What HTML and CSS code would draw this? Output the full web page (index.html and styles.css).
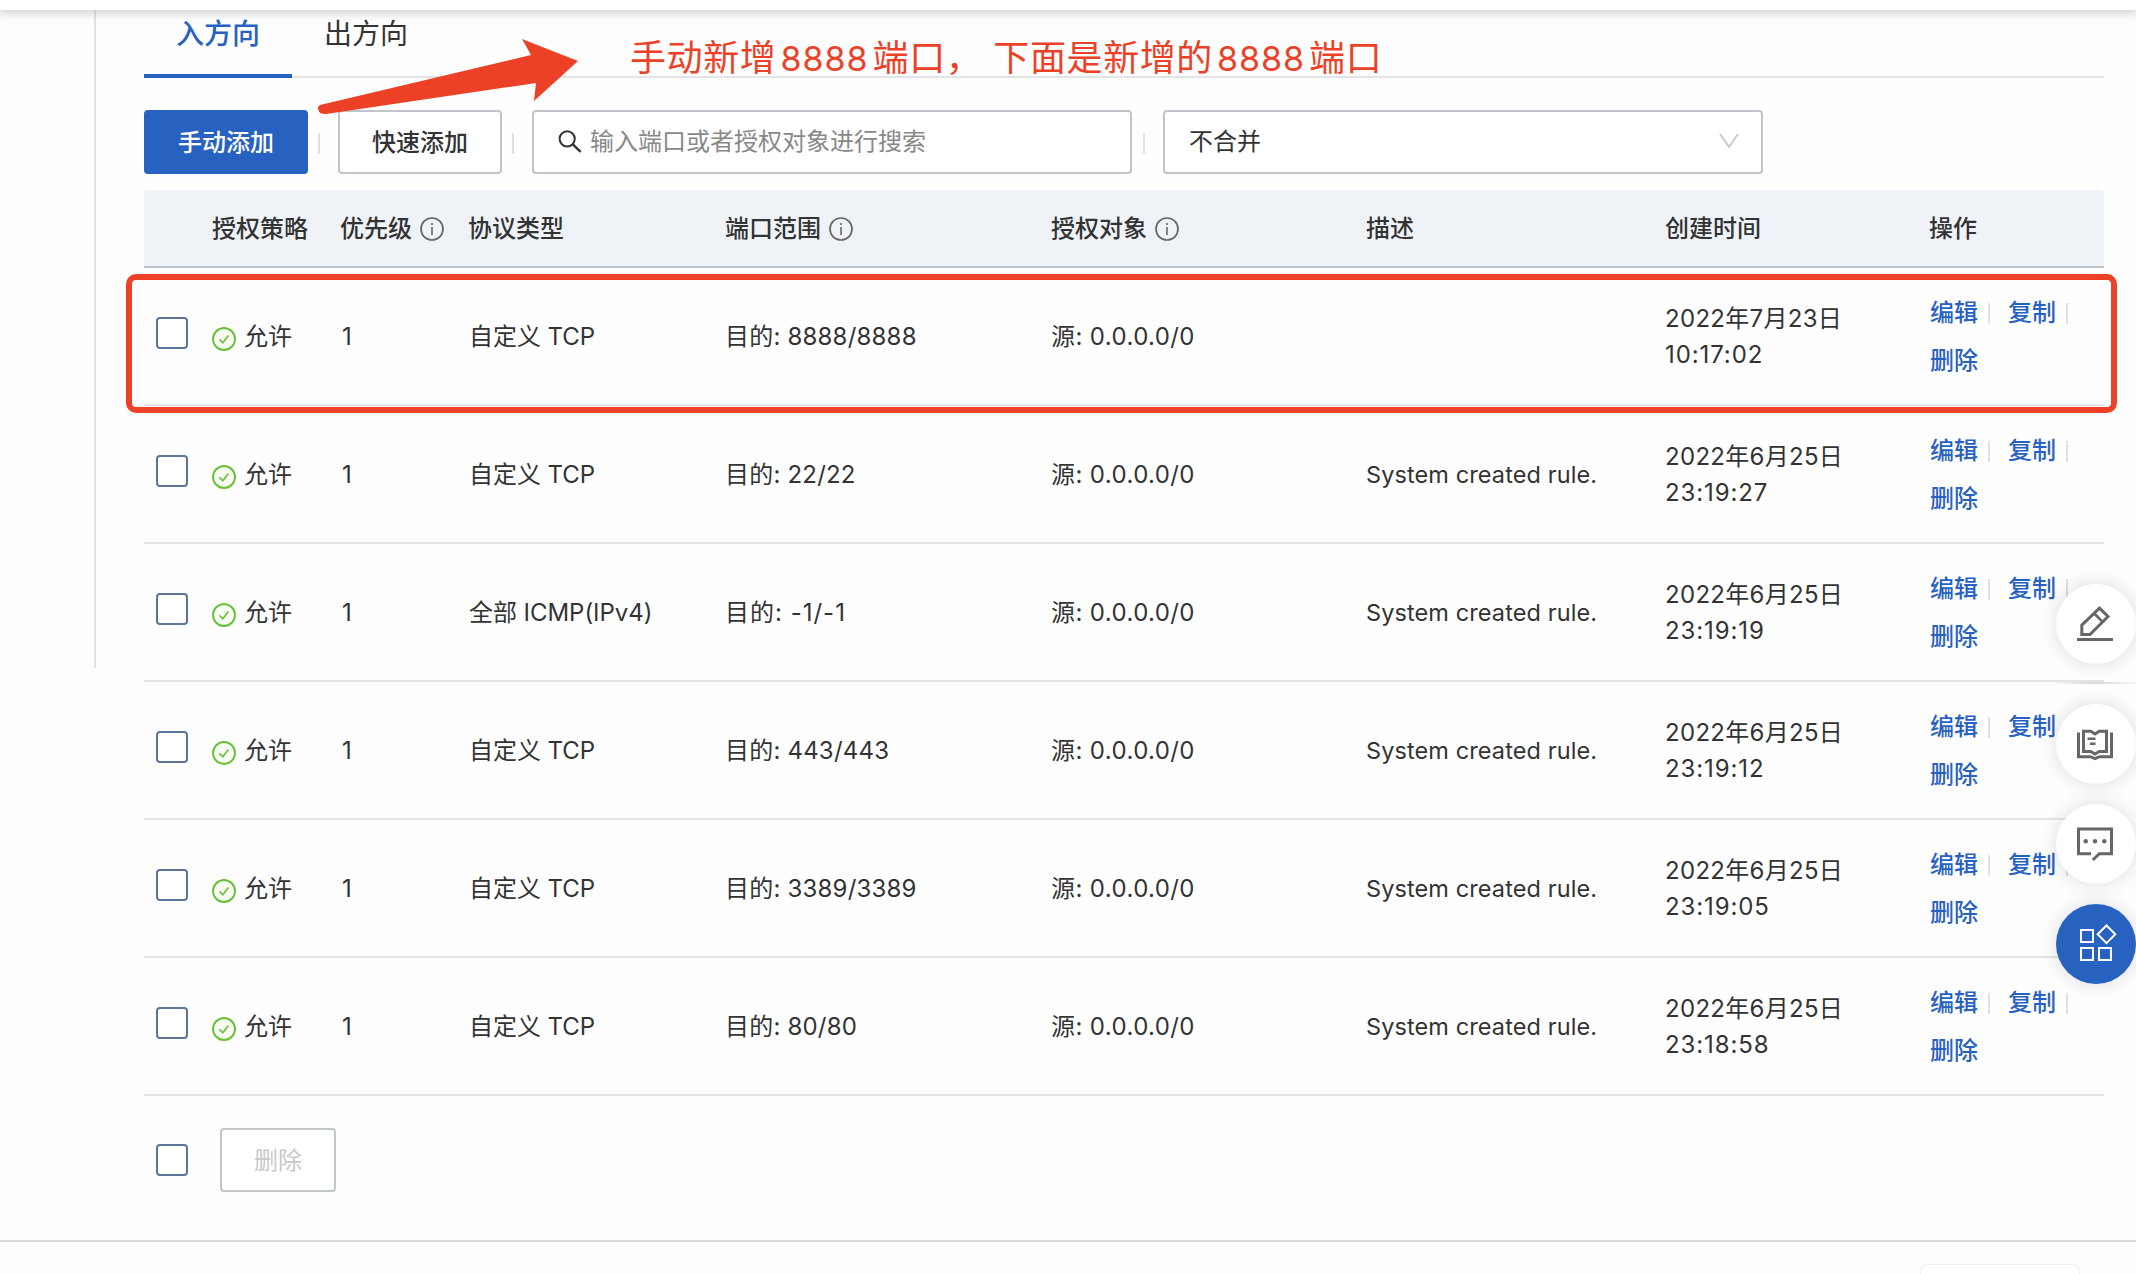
FILE: index.html
```html
<!DOCTYPE html>
<html lang="zh-CN">
<head>
<meta charset="utf-8">
<title>安全组规则</title>
<link rel="stylesheet" href="styles.css">
</head>
<body>
<svg class="defs" width="0" height="0" aria-hidden="true">
  <symbol id="info" viewBox="0 0 24 24"><circle cx="12" cy="12" r="11" fill="none" stroke="#666" stroke-width="1.7"/><path d="M12 10v8" stroke="#666" stroke-width="1.6"/><circle cx="12" cy="7" r="1.1" fill="#666"/></symbol>
  <symbol id="ok" viewBox="0 0 24 24"><circle cx="12" cy="12" r="11" fill="#f8fdf3" stroke="#68bf3a" stroke-width="1.9"/><path d="M7.4 12.4l3.4 3.4 5.6-7.4" fill="none" stroke="#68bf3a" stroke-width="1.6"/></symbol>
</svg>
<header class="topbar"></header>
<main class="page">
  <aside class="side"></aside>
  <section class="content">
    <nav class="tabs"><a class="tab active">入方向</a><a class="tab">出方向</a></nav>
    <div class="toolbar">
      <button class="btn primary">手动添加</button><i class="sep"></i>
      <button class="btn">快速添加</button><i class="sep"></i>
      <div class="field search">
        <svg width="24" height="24" viewBox="0 0 24 24"><circle cx="9.2" cy="9.8" r="7.6" fill="none" stroke="#333" stroke-width="2"/><path d="M14.6 15.2l8 7.6" stroke="#333" stroke-width="2.4"/></svg>
        <span>输入端口或者授权对象进行搜索</span>
      </div><i class="sep last"></i>
      <div class="field select"><span>不合并</span>
        <svg width="20" height="16" viewBox="0 0 20 16"><path d="M1 1l9 13 9-13" fill="none" stroke="#c8c8c8" stroke-width="1.8"/></svg>
      </div>
    </div>
    <table class="rules">
      <colgroup><col class="c-check"><col class="c-policy"><col class="c-prio"><col class="c-proto"><col class="c-port"><col class="c-source"><col class="c-desc"><col class="c-time"><col></colgroup>
      <thead><tr>
        <th></th><th>授权策略</th>
        <th><span class="label">优先级<svg class="info"><use href="#info"/></svg></span></th>
        <th>协议类型</th>
        <th><span class="label">端口范围<svg class="info"><use href="#info"/></svg></span></th>
        <th><span class="label">授权对象<svg class="info"><use href="#info"/></svg></span></th>
        <th>描述</th><th>创建时间</th><th>操作</th>
      </tr></thead>
      <tbody>
        <tr><td><i class="check"></i></td><td><span class="allow"><svg class="ok"><use href="#ok"/></svg>允许</span></td><td class="prio">1</td><td class="proto">自定义 TCP</td><td class="port">目的: 8888/8888</td><td>源: 0.0.0.0/0</td><td class="desc"></td><td class="time">2022年7月23日<br>10:17:02</td><td><div class="ops"><a>编辑</a><i class="sep"></i><a>复制</a><i class="sep"></i><a>删除</a></div></td></tr>
        <tr><td><i class="check"></i></td><td><span class="allow"><svg class="ok"><use href="#ok"/></svg>允许</span></td><td class="prio">1</td><td class="proto">自定义 TCP</td><td class="port">目的: 22/22</td><td>源: 0.0.0.0/0</td><td class="desc">System created rule.</td><td class="time">2022年6月25日<br>23:19:27</td><td><div class="ops"><a>编辑</a><i class="sep"></i><a>复制</a><i class="sep"></i><a>删除</a></div></td></tr>
        <tr><td><i class="check"></i></td><td><span class="allow"><svg class="ok"><use href="#ok"/></svg>允许</span></td><td class="prio">1</td><td class="proto">全部 ICMP(IPv4)</td><td class="port all">目的: -1/-1</td><td>源: 0.0.0.0/0</td><td class="desc">System created rule.</td><td class="time">2022年6月25日<br>23:19:19</td><td><div class="ops"><a>编辑</a><i class="sep"></i><a>复制</a><i class="sep"></i><a>删除</a></div></td></tr>
        <tr><td><i class="check"></i></td><td><span class="allow"><svg class="ok"><use href="#ok"/></svg>允许</span></td><td class="prio">1</td><td class="proto">自定义 TCP</td><td class="port">目的: 443/443</td><td>源: 0.0.0.0/0</td><td class="desc">System created rule.</td><td class="time">2022年6月25日<br>23:19:12</td><td><div class="ops"><a>编辑</a><i class="sep"></i><a>复制</a><i class="sep"></i><a>删除</a></div></td></tr>
        <tr><td><i class="check"></i></td><td><span class="allow"><svg class="ok"><use href="#ok"/></svg>允许</span></td><td class="prio">1</td><td class="proto">自定义 TCP</td><td class="port">目的: 3389/3389</td><td>源: 0.0.0.0/0</td><td class="desc">System created rule.</td><td class="time">2022年6月25日<br>23:19:05</td><td><div class="ops"><a>编辑</a><i class="sep"></i><a>复制</a><i class="sep"></i><a>删除</a></div></td></tr>
        <tr><td><i class="check"></i></td><td><span class="allow"><svg class="ok"><use href="#ok"/></svg>允许</span></td><td class="prio">1</td><td class="proto">自定义 TCP</td><td class="port">目的: 80/80</td><td>源: 0.0.0.0/0</td><td class="desc">System created rule.</td><td class="time">2022年6月25日<br>23:18:58</td><td><div class="ops"><a>编辑</a><i class="sep"></i><a>复制</a><i class="sep"></i><a>删除</a></div></td></tr>
      </tbody>
    </table>
    <div class="batch"><i class="check"></i><button class="btn disabled">删除</button></div>
  </section>
</main>
<footer class="footer"><div class="footer-box"></div></footer>

<div class="float-tools">
  <div class="fab"><svg width="36" height="36" viewBox="0 0 36 36" fill="none" stroke="#666" stroke-width="3"><path d="M4.8 28.5v-9.3L22.5 2.2l8.5 8.3-18 18z"/><path d="M17.3 7.5l8.3 8.3" stroke-width="2.6"/><path d="M0 33.5h36"/></svg></div>
  <i class="fab-line"></i>
  <div class="fab"><svg width="36" height="36" viewBox="0 0 36 36" fill="none" stroke="#666" stroke-width="3"><path d="M6.5 5.2h7.3l4.2 2.7 4.2-2.7h7.3v20.3h-7.3L18 28l-4.200-2.500H6.500z"/><path d="M1.500 6.500v24.200h12l4.500 2 4.500-2h12V6.500"/><path d="M10.500 12.800h8M13 17.800h5.500" stroke-width="2.600"/></svg></div>
  <div class="fab comment"><svg width="36" height="36" viewBox="0 0 36 36" fill="none" stroke="#666" stroke-width="3"><path d="M14 27.700H1.500V3h33v24.700H22.300L15.800 34"/><g fill="#666" stroke="none"><circle cx="8.700" cy="15.300" r="2.200"/><circle cx="18" cy="15.300" r="2.200"/><circle cx="27.300" cy="15.300" r="2.200"/></g></svg></div>
  <div class="fab blue"><svg width="38" height="38" viewBox="0 0 38 38" fill="none" stroke="#fff" stroke-width="2"><path d="M2 6h12v12H2zM2 24h12v12H2zM20 24h12v12H20z"/><path d="M27.500 1.500l8.800 8.800-8.800 8.800-8.800-8.800z"/></svg></div>
</div>

<div class="mark-box"></div>
<svg class="mark-arrow" width="270" height="86" viewBox="0 0 270 86"><path d="M13 74.500L222 25 213 9l56 22-44 40 2-18L17 84q-6 .5-7.500-3.500-2-5 3.500-6z" fill="#ec4127"/></svg>
<p class="mark-text"><span>手动新增</span><span class="num">8888</span><span class="m2">端口，</span><span>下面是新增的</span><span class="num">8888</span><span>端口</span></p>
</body>
</html>
```
FILE: styles.css
```css
* { box-sizing: border-box; }
html, body { margin: 0; }
body {
  width: 2136px;
  height: 1274px;
  overflow: hidden;
  position: relative;
  background: #fefefe;
  color: #333;
  font: 24px/36px Inter, "Noto Sans CJK SC", sans-serif;
}
.defs { position: absolute; }
.topbar {
  position: relative;
  height: 10px;
  background: #fff;
  box-shadow: 0 0 12px 2px rgba(0, 0, 0, .22);
}
.page { display: flex; height: 1230px; }
.side { width: 96px; height: 658px; border-right: 2px solid #e3e3e3; }
.content { width: 1960px; margin-left: 48px; }

.tabs { display: flex; height: 68px; box-shadow: inset 0 -2px #e3e4e6; font-size: 28px; }
.tab { padding: 6px 32px 0; }
.tab.active { color: #2862c1; font-weight: 500; border-bottom: 4px solid #2862c1; }

.toolbar { display: flex; align-items: center; margin-top: 32px; }
.btn {
  width: 164px;
  height: 64px;
  padding: 0 0 2px;
  border: 2px solid #c0c5cb;
  border-radius: 4px;
  background: #fff;
  color: #333;
  font: 500 24px/36px "Noto Sans CJK SC", sans-serif;
}
.btn.primary { background: #2862c1; border-color: #2862c1; color: #fff; }
.btn.disabled { width: 116px; color: #c8c8c8; font-weight: 400; }
.sep { width: 2px; height: 21px; margin: 2px 18px 0 10px; background: #e0e0e0; }
.sep.last { margin-left: 11px; }
.field {
  display: flex;
  align-items: center;
  width: 600px;
  height: 64px;
  padding: 0 24px;
  border: 2px solid #c0c5cb;
  border-radius: 4px;
  background: #fff;
}
.field svg { margin-bottom: 2px; }
.search { gap: 8px; color: #888; }
.select { justify-content: space-between; padding-right: 22px; }

.rules { width: 1960px; margin-top: 16px; table-layout: fixed; border-collapse: separate; border-spacing: 0; }
.c-check { width: 68px; }
.c-policy, .c-prio { width: 128px; }
.c-proto { width: 257px; }
.c-port { width: 326px; }
.c-source { width: 315px; }
.c-desc { width: 299px; }
.c-time { width: 264px; }
th {
  height: 78px;
  padding: 2px 0 0;
  background: #eff3f8;
  border-bottom: 2px solid #c0c5cb;
  font-weight: 500;
  text-align: left;
  white-space: nowrap;
}
th:first-child { border-top-left-radius: 4px; }
th:last-child { border-top-right-radius: 4px; }
td { height: 138px; padding: 2px 0 0; border-bottom: 2px solid #e3e4e6; white-space: nowrap; letter-spacing: .4px; }
.label { display: flex; align-items: center; gap: 8px; }
.info, .ok { width: 24px; height: 24px; }
.check {
  display: block;
  width: 32px;
  height: 32px;
  margin: 0 0 8px 12px;
  border: 2px solid #5b7599;
  border-radius: 4px;
  background: #fff;
}
.allow { display: flex; align-items: center; gap: 8px; letter-spacing: 0; }
.ok { margin-top: 4px; }
.prio { padding-left: 2px; }
.proto { padding-left: 1px; letter-spacing: -.05px; }
.port { letter-spacing: .2px; }
.port.all { letter-spacing: 1px; }
.desc { font-size: 23.5px; letter-spacing: .1px; }
.time { letter-spacing: .9px; }
.time::first-line { letter-spacing: .3px; }
.ops { display: flex; flex-wrap: wrap; align-items: center; width: 162px; padding-left: 1px; line-height: 48px; letter-spacing: 0; color: #2862c1; font-weight: 500; }
.ops .sep { margin-top: 0; }

.batch { display: flex; align-items: center; gap: 32px; margin-top: 32px; }
.batch .check { margin-bottom: 0; }
.footer { height: 34px; padding-top: 22px; border-top: 2px solid #dadada; overflow: hidden; }
.footer-box { width: 160px; height: 40px; margin-left: 1920px; border: 1px solid #eee; border-radius: 8px; background: #fff; }

.float-tools { position: absolute; right: 0; top: 584px; width: 80px; }
.fab {
  display: flex;
  align-items: center;
  justify-content: center;
  width: 80px;
  height: 80px;
  padding-right: 2px;
  border-radius: 50%;
  background: #fff;
  box-shadow: 0 0 20px rgba(0, 0, 0, .14);
}
.fab-line { display: block; height: 2px; margin: 18px 0 20px; background: linear-gradient(90deg, #f4f5f6, #d5d9dd, #f4f5f6); }
.comment { margin: 20px 0; }
.fab.blue { padding: 0 0 3px 3px; background: #2862c1; }

.mark-box { position: absolute; left: 126px; top: 274px; width: 1991px; height: 139px; border: 6px solid #ec4127; border-radius: 10px; }
.mark-arrow { position: absolute; left: 309px; top: 30px; }
.mark-text {
  position: absolute;
  left: 630px;
  top: 28px;
  margin: 0;
  color: #ec4127;
  font: 36px/54px "Noto Sans CJK SC", sans-serif;
  letter-spacing: .6px;
  white-space: nowrap;
}
.mark-text .num { margin: 0 4px; font-family: Inter, sans-serif; font-size: 34px; letter-spacing: 1px; }
.mark-text .m2 { margin-right: 11px; }
```
